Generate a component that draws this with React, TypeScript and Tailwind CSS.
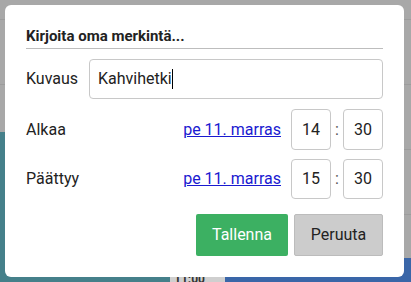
export default function App() {
  const font = { fontFamily: "Roboto, 'Liberation Sans', sans-serif" };
  return (
    <div className="relative w-[411px] h-[282px] overflow-hidden" style={font}>
      {/* calendar behind the dialog */}
      <div className="flex h-full w-full">
        <div className="flex flex-col w-[170px]">
          <div className="h-[132px] bg-[#a8a8a8] flex flex-col">
            <div className="h-[20px] border-b border-[#9c9c9c]" />
            <div className="h-[65px] border-b border-[#9c9c9c]" />
          </div>
          <div className="flex-1 bg-[#45808a]" />
        </div>
        <div className="flex flex-col w-[55px] bg-[#a8a8a8]">
          <div className="flex-1" />
          <div className="h-[10px] bg-[#cfcfcf] text-[12px] font-bold leading-[14px] text-[#333] pl-[4px]">11:00</div>
        </div>
        <div className="flex flex-col flex-1">
          <div className="h-[258px] bg-[#a8a8a8] flex flex-col">
            <div className="h-[20px] border-b border-[#9c9c9c]" />
            <div className="h-[65px] border-b border-[#9c9c9c]" />
            <div className="h-[65px] border-b border-[#9c9c9c]" />
            <div className="h-[65px] border-b border-[#9c9c9c]" />
          </div>
          <div className="flex-1 bg-[#3a66a8]" />
        </div>
      </div>

      {/* dialog */}
      <div className="absolute left-[5px] top-[5px] w-[399px] h-[272px] bg-white rounded-[6px] px-[21px] pt-[22px] text-[#222]">
        <div className="h-[22px] border-b border-[#bdbdbd] text-[15px] font-bold leading-[18px]">
          Kirjoita oma merkintä...
        </div>
        <div className="flex items-center mt-[10px] h-[40px]">
          <div className="w-[63px] text-[16px]">Kuvaus</div>
          <div className="flex-1 h-[40px] border border-[#c8c8c8] rounded-[4px] flex items-center pl-[8px] text-[16px]">
            Kahvihetki
            <span className="inline-block w-[1px] h-[20px] bg-black" />
          </div>
        </div>
        <div className="flex items-center mt-[10px] h-[41px]">
          <div className="text-[16px]">Alkaa</div>
          <a href="#" className="ml-auto mr-[10px] text-[16px] text-[#1a1ad0] underline">pe 11. marras</a>
          <div className="w-[40px] h-[41px] border border-[#c8c8c8] rounded-[4px] flex items-center justify-center text-[16px]">14</div>
          <div className="w-[12px] text-center text-[16px] text-[#555]">:</div>
          <div className="w-[40px] h-[41px] border border-[#c8c8c8] rounded-[4px] flex items-center justify-center text-[16px]">30</div>
        </div>
        <div className="flex items-center mt-[9px] h-[40px]">
          <div className="text-[16px]">Päättyy</div>
          <a href="#" className="ml-auto mr-[10px] text-[16px] text-[#1a1ad0] underline">pe 11. marras</a>
          <div className="w-[40px] h-[40px] border border-[#c8c8c8] rounded-[4px] flex items-center justify-center text-[16px]">15</div>
          <div className="w-[12px] text-center text-[16px] text-[#555]">:</div>
          <div className="w-[40px] h-[40px] border border-[#c8c8c8] rounded-[4px] flex items-center justify-center text-[16px]">30</div>
        </div>
        <div className="flex justify-end gap-[6px] mt-[15px]">
          <button className="w-[92px] h-[42px] bg-[#3cb062] rounded-[2px] text-white text-[16px]">Tallenna</button>
          <button className="w-[89px] h-[42px] bg-[#cccccc] border border-[#bcbcbc] rounded-[2px] text-[#222] text-[16px]">Peruuta</button>
        </div>
      </div>
    </div>
  );
}
